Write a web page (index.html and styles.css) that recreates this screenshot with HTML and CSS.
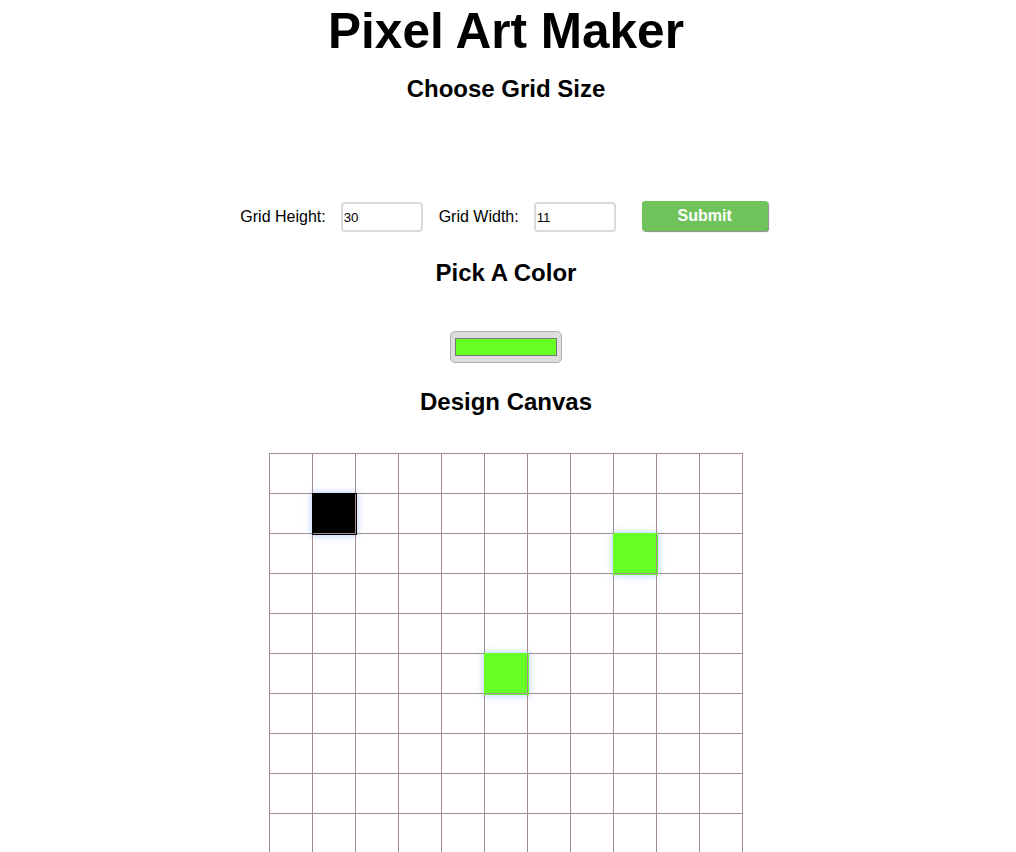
FILE: index.html
```html
<!DOCTYPE html>
<html>
<head>
<meta charset="utf-8">
<title>Pixel Art Maker</title>
<link rel="stylesheet" href="styles.css">
</head>
<body>
<h1 class="title">Pixel Art Maker</h1>
<h2 class="heading heading-size">Choose Grid Size</h2>
<form class="size-form">
  <label class="field-label" for="inputHeight">Grid Height:</label>
  <input class="num-input" type="text" id="inputHeight" value="30">
  <label class="field-label" for="inputWidth">Grid Width:</label>
  <input class="num-input" type="text" id="inputWidth" value="11">
  <button class="submit-btn" type="button">Submit</button>
</form>
<h2 class="heading heading-color">Pick A Color</h2>
<div class="picker-wrap">
  <div class="color-picker"><span class="swatch"></span></div>
</div>
<h2 class="heading heading-canvas">Design Canvas</h2>
<table class="canvas">
<tr><td></td><td></td><td></td><td></td><td></td><td></td><td></td><td></td><td></td><td></td><td></td></tr>
<tr><td></td><td class="black"></td><td></td><td></td><td></td><td></td><td></td><td></td><td></td><td></td><td></td></tr>
<tr><td></td><td></td><td></td><td></td><td></td><td></td><td></td><td></td><td class="green"></td><td></td><td></td></tr>
<tr><td></td><td></td><td></td><td></td><td></td><td></td><td></td><td></td><td></td><td></td><td></td></tr>
<tr><td></td><td></td><td></td><td></td><td></td><td></td><td></td><td></td><td></td><td></td><td></td></tr>
<tr><td></td><td></td><td></td><td></td><td></td><td class="green"></td><td></td><td></td><td></td><td></td><td></td></tr>
<tr><td></td><td></td><td></td><td></td><td></td><td></td><td></td><td></td><td></td><td></td><td></td></tr>
<tr><td></td><td></td><td></td><td></td><td></td><td></td><td></td><td></td><td></td><td></td><td></td></tr>
<tr><td></td><td></td><td></td><td></td><td></td><td></td><td></td><td></td><td></td><td></td><td></td></tr>
<tr><td></td><td></td><td></td><td></td><td></td><td></td><td></td><td></td><td></td><td></td><td></td></tr>
<tr><td></td><td></td><td></td><td></td><td></td><td></td><td></td><td></td><td></td><td></td><td></td></tr>
<tr><td></td><td></td><td></td><td></td><td></td><td></td><td></td><td></td><td></td><td></td><td></td></tr>
<tr><td></td><td></td><td></td><td></td><td></td><td></td><td></td><td></td><td></td><td></td><td></td></tr>
<tr><td></td><td></td><td></td><td></td><td></td><td></td><td></td><td></td><td></td><td></td><td></td></tr>
<tr><td></td><td></td><td></td><td></td><td></td><td></td><td></td><td></td><td></td><td></td><td></td></tr>
<tr><td></td><td></td><td></td><td></td><td></td><td></td><td></td><td></td><td></td><td></td><td></td></tr>
<tr><td></td><td></td><td></td><td></td><td></td><td></td><td></td><td></td><td></td><td></td><td></td></tr>
<tr><td></td><td></td><td></td><td></td><td></td><td></td><td></td><td></td><td></td><td></td><td></td></tr>
<tr><td></td><td></td><td></td><td></td><td></td><td></td><td></td><td></td><td></td><td></td><td></td></tr>
<tr><td></td><td></td><td></td><td></td><td></td><td></td><td></td><td></td><td></td><td></td><td></td></tr>
<tr><td></td><td></td><td></td><td></td><td></td><td></td><td></td><td></td><td></td><td></td><td></td></tr>
<tr><td></td><td></td><td></td><td></td><td></td><td></td><td></td><td></td><td></td><td></td><td></td></tr>
<tr><td></td><td></td><td></td><td></td><td></td><td></td><td></td><td></td><td></td><td></td><td></td></tr>
<tr><td></td><td></td><td></td><td></td><td></td><td></td><td></td><td></td><td></td><td></td><td></td></tr>
<tr><td></td><td></td><td></td><td></td><td></td><td></td><td></td><td></td><td></td><td></td><td></td></tr>
<tr><td></td><td></td><td></td><td></td><td></td><td></td><td></td><td></td><td></td><td></td><td></td></tr>
<tr><td></td><td></td><td></td><td></td><td></td><td></td><td></td><td></td><td></td><td></td><td></td></tr>
<tr><td></td><td></td><td></td><td></td><td></td><td></td><td></td><td></td><td></td><td></td><td></td></tr>
<tr><td></td><td></td><td></td><td></td><td></td><td></td><td></td><td></td><td></td><td></td><td></td></tr>
<tr><td></td><td></td><td></td><td></td><td></td><td></td><td></td><td></td><td></td><td></td><td></td></tr>
</table>
</body>
</html>
```

FILE: styles.css
```css
html {
  overflow: hidden;
}
body {
  margin: 0;
  padding: 0 4px 0 0;
  font-family: "Liberation Sans", Arial, sans-serif;
  color: #000;
  background: #fff;
  text-align: center;
}
.title {
  margin: 3px 0 0;
  font-size: 49.5px;
  line-height: 56px;
  font-weight: bold;
}
.heading {
  font-size: 24px;
  line-height: 28px;
  font-weight: bold;
  margin: 0;
}
.heading-size {
  margin-top: 16px;
}
.size-form {
  display: flex;
  justify-content: center;
  align-items: center;
  margin-top: 99px;
  padding-right: 4px;
  height: 30px;
}
.field-label {
  font-size: 16px;
  margin-right: 15px;
}
.num-input {
  box-sizing: border-box;
  width: 82px;
  height: 30px;
  border: 2px solid #dadada;
  border-radius: 4px;
  padding: 0 1px;
  font-family: "Liberation Sans", Arial, sans-serif;
  font-size: 13.33px;
  color: #000;
  margin-right: 16px;
  outline: none;
}
.num-input + .submit-btn {
  margin-left: 10px;
}
.submit-btn {
  box-sizing: border-box;
  width: 126px;
  height: 30px;
  align-self: flex-start;
  margin-top: -1px;
  background: #70c35b;
  color: #fff;
  font-family: "Liberation Sans", Arial, sans-serif;
  font-size: 16px;
  font-weight: bold;
  border: none;
  border-radius: 3px;
  box-shadow: 1px 1px 1px #8a8a8a;
  padding: 0;
}
.heading-color {
  margin-top: 27px;
}
.picker-wrap {
  display: flex;
  justify-content: center;
  margin-top: 44px;
}
.color-picker {
  box-sizing: border-box;
  width: 112px;
  height: 32px;
  background: #dddddd;
  border: 1px solid #b0b0b0;
  border-radius: 5px;
  display: flex;
  align-items: center;
  justify-content: center;
}
.swatch {
  box-sizing: border-box;
  width: 102px;
  height: 18px;
  background: #66ff26;
  border: 1px solid #777777;
}
.heading-canvas {
  margin-top: 25px;
}
.canvas {
  margin: 37px auto 0;
  border-collapse: collapse;
}
.canvas td {
  width: 42px;
  height: 39px;
  padding: 0;
  border: 1px solid #a38c8c;
}
.canvas td.black {
  background: #000;
  outline: 1px solid #000;
  box-shadow: 0 0 6px 2px rgba(120, 170, 255, 0.5);
}
.canvas td.green {
  background: #66ff26;
  outline: 1px solid #66ff26;
  box-shadow: 0 0 6px 2px rgba(120, 170, 255, 0.5);
}
```
